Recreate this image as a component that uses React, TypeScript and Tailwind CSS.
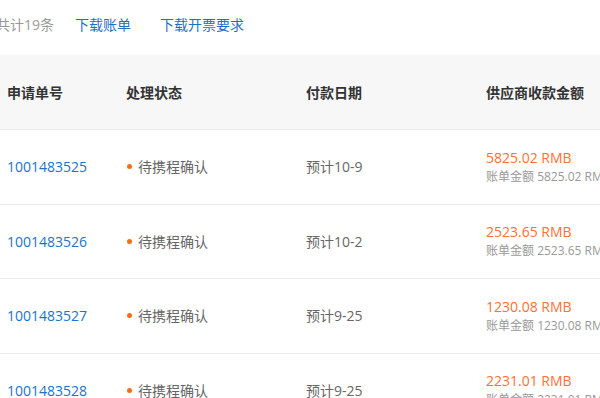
import React from "react";

const rows = [
  { id: "1001483525", date: "预计10-9", amt: "5825.02" },
  { id: "1001483526", date: "预计10-2", amt: "2523.65" },
  { id: "1001483527", date: "预计9-25", amt: "1230.08" },
  { id: "1001483528", date: "预计9-25", amt: "2231.01" },
];

export default function App() {
  return (
    <div
      className="w-[600px] h-[398px] overflow-hidden bg-white"
      style={{ fontFamily: '"Open Sans", "Noto Sans CJK SC", sans-serif' }}
    >
      <div className="h-[55px] flex items-center text-[14px] ml-[-4px] pb-[7px]">
        <span className="text-[#999999]">共计19条</span>
        <span className="ml-[21px] text-[#1f6fc6]">下载账单</span>
        <span className="ml-[29px] text-[#1f6fc6]">下载开票要求</span>
      </div>
      <div className="w-[760px]">
        <div className="h-[75px] bg-[#f7f7f7] border-b border-[#ebebeb] flex items-center text-[14px] text-[#333333] font-semibold">
          <div className="w-[126px] pl-[7px]">申请单号</div>
          <div className="w-[180px]">处理状态</div>
          <div className="w-[180px]">付款日期</div>
          <div className="flex-1">供应商收款金额</div>
        </div>
        {rows.map((r) => (
          <div
            key={r.id}
            className="h-[74.5px] border-b border-[#ebebeb] flex items-center text-[14px]"
          >
            <div className="w-[126px] pl-[7px] text-[#1a73cc]">{r.id}</div>
            <div className="w-[180px] flex items-center text-[#666666]">
              <span className="w-[5px] h-[5px] rounded-full bg-[#ff6a13] ml-[1px] mr-[6px]" />
              待携程确认
            </div>
            <div className="w-[180px] text-[#666666]">{r.date}</div>
            <div className="flex-1 flex flex-col leading-[19px]">
              <span className="text-[#ff7033] text-[14px]">{r.amt} RMB</span>
              <span className="text-[#999999] text-[12px]">账单金额 {r.amt} RMB</span>
            </div>
          </div>
        ))}
      </div>
    </div>
  );
}
